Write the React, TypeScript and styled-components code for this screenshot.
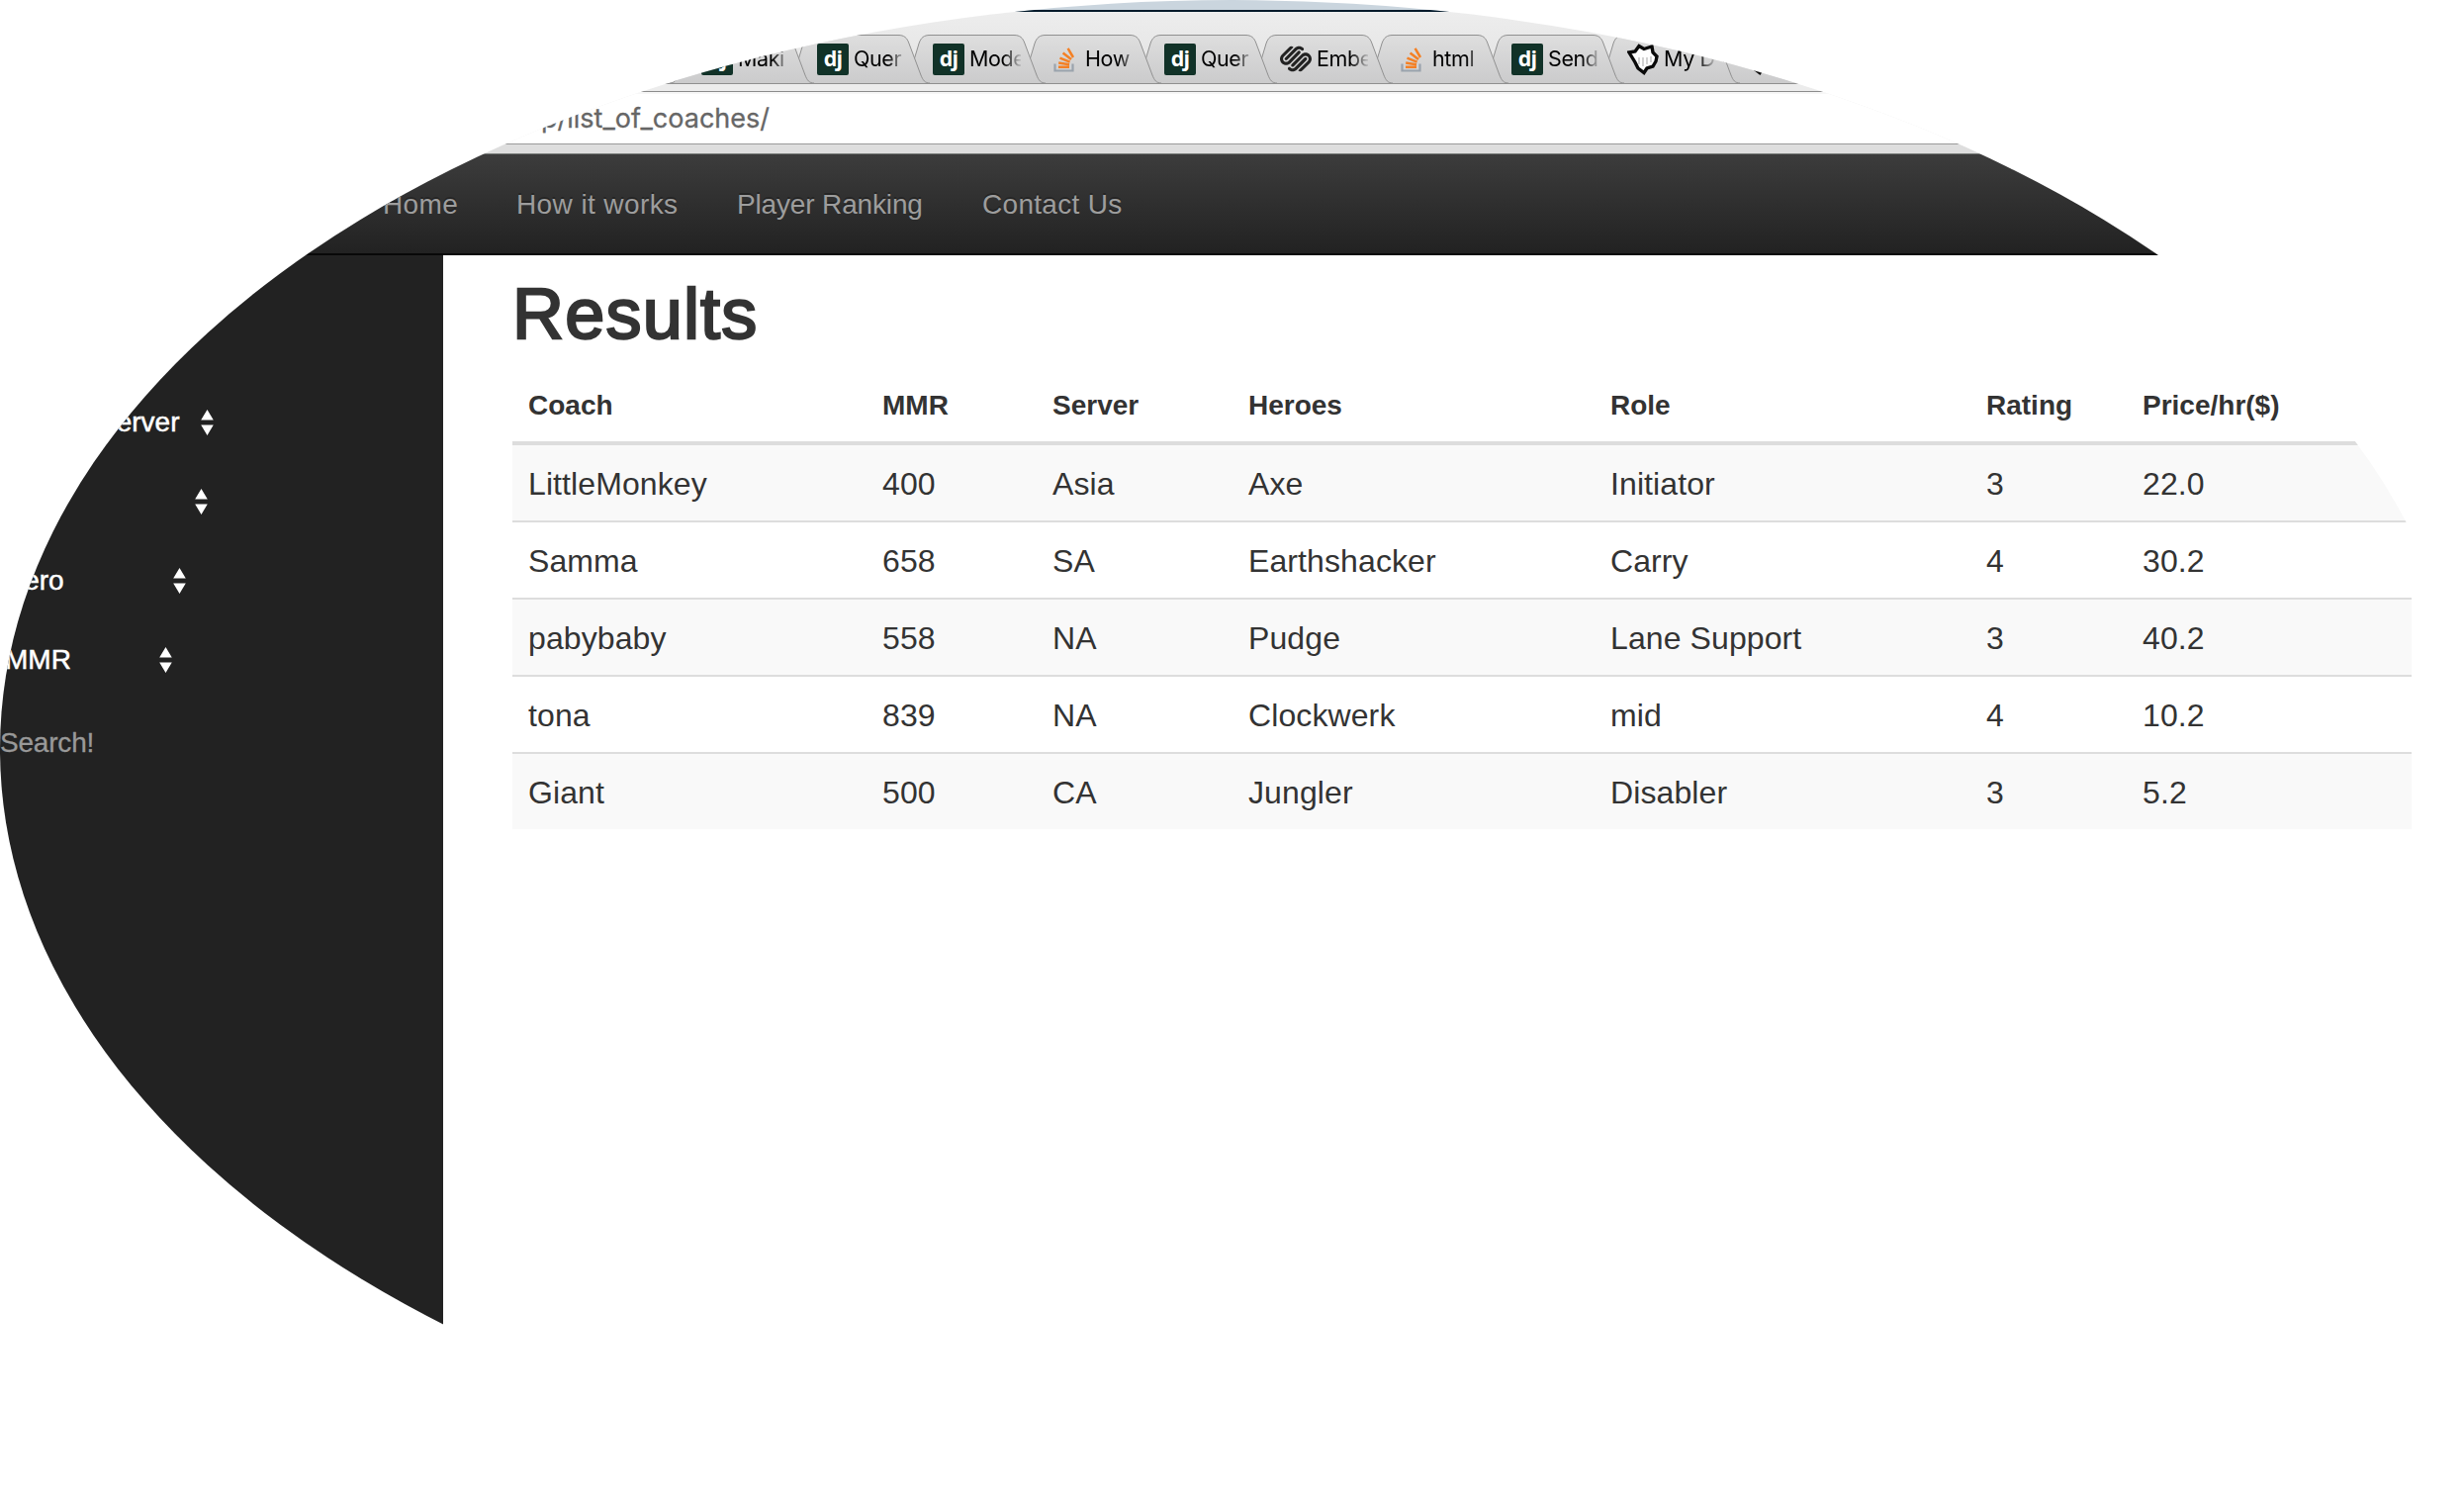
import React from 'react';
import styled, { createGlobalStyle } from 'styled-components';
import { SiSquarespace } from 'react-icons/si';

const Global = createGlobalStyle`
  html, body { margin: 0; background: #fff; }
  * { box-sizing: border-box; }
`;

const Page = styled.div`
  width: 2491px;
  height: 1514px;
  overflow: hidden;
  display: flex;
  flex-direction: column;
  background: #fff;
  color: #333;
  font-family: 'Liberation Sans', Arial, sans-serif;
  clip-path: ellipse(50% 50% at 50% 50%);
`;

const Desktop = styled.div`
  flex: none;
  height: 12px;
  background: #cad5de;
  border-bottom: 2px solid #031a2b;
`;

const TabStrip = styled.div`
  flex: none;
  display: flex;
  height: 73px;
  padding: 23px 0 0 691px;
  background: linear-gradient(#ededed, #e2e2e2);
  border-bottom: 1px solid #8f8f8f;
`;

const TabBox = styled.div<{ $order: number }>`
  flex: none;
  position: relative;
  z-index: ${(p) => 20 - p.$order};
  width: 117px;
  height: 49px;
  display: flex;
  align-items: center;
  padding-left: 18px;
`;

const TabShape = styled.svg`
  position: absolute;
  left: -16px;
  top: 0;
  z-index: -1;
`;

const IconSlot = styled.span`
  flex: none;
  width: 32px;
  height: 32px;
  display: flex;
  align-items: center;
  justify-content: center;
  color: #222;
`;

const DjangoMark = styled.span`
  width: 32px;
  height: 32px;
  border-radius: 2px;
  background: #113228;
  color: #fff;
  font: 700 21.5px/29px 'Open Sans', sans-serif;
  letter-spacing: -0.8px;
  text-align: center;
`;

const TabTitle = styled.span`
  width: 52px;
  margin-left: 5px;
  overflow: hidden;
  white-space: nowrap;
  color: #000;
  font: 400 21.5px/35px Inter, sans-serif;
  letter-spacing: -0.4px;
  mask-image: linear-gradient(90deg, #000 34px, transparent 54px);
`;

const Toolbar = styled.div`
  flex: none;
  height: 71px;
  display: flex;
  flex-direction: column;
  background: #ececec;
`;

const ToolbarEdge = styled.div`
  flex: none;
  height: 8px;
  border-bottom: 1px solid #8c8c8c;
`;

const AddressBar = styled.div`
  flex: none;
  height: 53px;
  padding: 0 0 0 547px;
  background: #fff;
  border-top: 2px solid #f7f7f7;
  border-bottom: 1px solid #9a9a9a;
  color: #666;
  font: 400 27px/50px Inter, sans-serif;
  -webkit-text-stroke: 0.3px #666;
  white-space: nowrap;
`;

const ToolbarFoot = styled.div`
  flex: 1;
  background: #dedede;
  border-bottom: 1px solid #777a78;
`;

const NavBar = styled.nav`
  flex: none;
  height: 102px;
  display: flex;
  gap: 60px;
  padding-left: 387px;
  background: linear-gradient(#3c3c3c, #222);
  border-bottom: 2px solid #080808;
`;

const NavLink = styled.a<{ $width: number; $tracking: number }>`
  width: ${(p) => p.$width}px;
  color: #9d9d9d;
  font-size: 28px;
  line-height: 101px;
  letter-spacing: ${(p) => p.$tracking}px;
  white-space: nowrap;
  text-shadow: 0 -2px 0 rgba(0, 0, 0, 0.25);
`;

const Body = styled.div`
  flex: 1;
  display: flex;
`;

const Sidebar = styled.aside`
  flex: none;
  width: 448px;
  padding-top: 129px;
  background: #222;
  color: #fff;
  font-size: 28px;
`;

const Select = styled.div<{ $start: number; $end: number }>`
  width: ${(p) => p.$end}px;
  height: 80px;
  padding-left: ${(p) => p.$start}px;
  display: flex;
  justify-content: space-between;
  line-height: 80px;
  -webkit-text-stroke: 0.5px #fff;
`;

const Arrows = styled.svg`
  display: block;
  margin-top: 27px;
`;

const SearchLink = styled.a`
  display: block;
  padding-top: 26px;
  color: #999;
  line-height: 36px;
  letter-spacing: -0.2px;
  -webkit-text-stroke: 0.3px #999;
`;

const Main = styled.main`
  width: 1990px;
  padding: 19px 0 0 70px;
`;

const Title = styled.h1`
  margin: 0;
  height: 95px;
  color: #333;
  font-size: 72px;
  font-weight: 400;
  line-height: 80px;
  letter-spacing: 1.2px;
  -webkit-text-stroke: 2.4px #333;
`;

const Table = styled.table`
  width: 1920px;
  table-layout: fixed;
  border-collapse: separate;
  border-spacing: 0;
`;

const Th = styled.th`
  height: 78px;
  padding: 2px 16px 0;
  border-bottom: 4px solid #ddd;
  text-align: left;
  font-size: 28px;
  line-height: 40px;
`;

const Row = styled.tr`
  &:nth-child(odd) { background: #f9f9f9; }
  & + & td { border-top: 2px solid #ddd; height: 78px; }
`;

const Td = styled.td`
  height: 76px;
  padding: 2px 16px 0;
  font-size: 32px;
  line-height: 44px;
  letter-spacing: 0.1px;
  font-kerning: none;
  white-space: nowrap;
`;

const StackIcon = () => (
  <svg width="22" height="26" viewBox="0 0 22 26" fill="none">
    <path d="M1.5 17.5V24.5H19.5V17.5" stroke="#9aa3ad" strokeWidth="2.2" />
    <path d="M5 20.8H16M5.2 16.6L16 18.2M6.5 11.6L16.6 15.6M9.6 6.4L18 13M14.6 1.8L20 11" stroke="#f48024" strokeWidth="2.5" />
  </svg>
);

const BearIcon = () => (
  <svg width="32" height="32" viewBox="0 0 32 32">
    <path d="M2 9L8 8L12 2.5L17 5.5L25 3L26 9L30 13L29 18L26 23L20 25L17 29.5L11 25L8 19L5 14Z" fill="#fff" stroke="#0a0a0a" strokeWidth="3.4" />
    <path d="M12 14V21M16 14V23M20 14V21M24 13V19" stroke="#bbb" strokeWidth="1.3" />
  </svg>
);

const icons: Record<string, React.ReactNode> = {
  dj: <DjangoMark>dj</DjangoMark>,
  stack: <StackIcon />,
  square: <SiSquarespace size={33} />,
  bear: <BearIcon />,
};

const tabs = [
  ['dj', 'Maki'], ['dj', 'Quer'], ['dj', 'Mode'], ['stack', 'How'], ['dj', 'Quer'],
  ['square', 'Embe'], ['stack', 'html'], ['dj', 'Send'], ['bear', 'My D'], ['bear', ''],
];

const Tab = ({ icon, title, order }: { icon: string; title: string; order: number }) => (
  <TabBox $order={order}>
    <TabShape width="150" height="50" viewBox="-16 0 150 50">
      <defs>
        <linearGradient id="tabFill" x1="0" y1="0" x2="0" y2="1">
          <stop offset="0" stopColor="#dedede" />
          <stop offset="1" stopColor="#cbcbcc" />
        </linearGradient>
      </defs>
      <path
        d="M-14 49C-8 49 -7 45 -5 39L4 9C6 3 9 .5 15 .5H100C106 .5 109 3 111 9L123 41C125 46 127 49 132 49"
        fill="url(#tabFill)"
        stroke="#909090"
      />
    </TabShape>
    <IconSlot>{icons[icon]}</IconSlot>
    <TabTitle>{title}</TabTitle>
  </TabBox>
);

const UpDown = () => (
  <Arrows width="13" height="26" viewBox="0 0 13 26" fill="#fff">
    <path d="M6.5 0L12.8 10.5H.2ZM6.5 26L12.8 15.5H.2Z" />
  </Arrows>
);

const filters = [
  { label: 'Server', start: 99, end: 216 },
  { label: '', start: 99, end: 210 },
  { label: 'Hero', start: 4, end: 188 },
  { label: 'MMR', start: 5, end: 174 },
];

const links: [string, number, number][] = [
  ['Home', 75, 0.4],
  ['How it works', 163, 0.4],
  ['Player Ranking', 188, -0.15],
  ['Contact Us', 143, 0.3],
];

const columns: [string, number][] = [
  ['Coach', 358], ['MMR', 172], ['Server', 198], ['Heroes', 366], ['Role', 380], ['Rating', 158], ['Price/hr($)', 288],
];

const coaches = [
  ['LittleMonkey', '400', 'Asia', 'Axe', 'Initiator', '3', '22.0'],
  ['Samma', '658', 'SA', 'Earthshacker', 'Carry', '4', '30.2'],
  ['pabybaby', '558', 'NA', 'Pudge', 'Lane Support', '3', '40.2'],
  ['tona', '839', 'NA', 'Clockwerk', 'mid', '4', '10.2'],
  ['Giant', '500', 'CA', 'Jungler', 'Disabler', '3', '5.2'],
];

export default function App() {
  return (
    <>
      <Global />
      <Page>
        <Desktop />
        <TabStrip>
          {tabs.map(([icon, title], i) => <Tab key={i} icon={icon} title={title} order={i} />)}
        </TabStrip>
        <Toolbar>
          <ToolbarEdge />
          <AddressBar>p/list_of_coaches/</AddressBar>
          <ToolbarFoot />
        </Toolbar>
        <NavBar>
          {links.map(([text, width, tracking]) => (
            <NavLink key={text} $width={width} $tracking={tracking}>{text}</NavLink>
          ))}
        </NavBar>
        <Body>
          <Sidebar>
            {filters.map((f) => (
              <Select key={f.end} $start={f.start} $end={f.end}>
                <span>{f.label}</span>
                <UpDown />
              </Select>
            ))}
            <SearchLink>Search!</SearchLink>
          </Sidebar>
          <Main>
            <Title>Results</Title>
            <Table>
              <colgroup>{columns.map(([name, width]) => <col key={name} width={width} />)}</colgroup>
              <thead><tr>{columns.map(([name]) => <Th key={name}>{name}</Th>)}</tr></thead>
              <tbody>
                {coaches.map((coach) => (
                  <Row key={coach[0]}>{coach.map((cell, i) => <Td key={i}>{cell}</Td>)}</Row>
                ))}
              </tbody>
            </Table>
          </Main>
        </Body>
      </Page>
    </>
  );
}
